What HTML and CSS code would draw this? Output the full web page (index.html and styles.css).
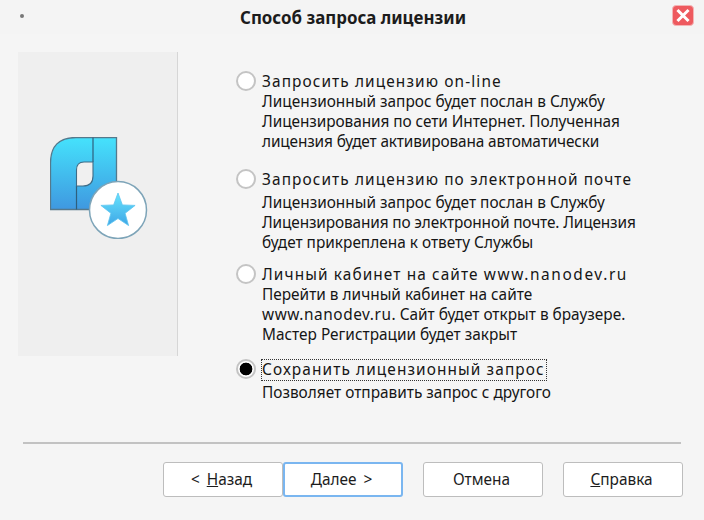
FILE: index.html
```html
<!DOCTYPE html>
<html lang="ru">
<head>
<meta charset="utf-8">
<title>Способ запроса лицензии</title>
<link rel="stylesheet" href="styles.css">
</head>
<body>
<div class="window">
  <header class="titlebar">
    <span class="dot"></span>
    <h1 class="title">Способ запроса лицензии</h1>
    <span class="close">
      <svg width="22" height="21" viewBox="0 0 22 21"><rect x="0.5" y="0.5" width="21" height="20" rx="3.5" fill="#ee5a5f" stroke="#f3b5b6"/><path d="M6.5 6l9 9M15.5 6l-9 9" stroke="#fff" stroke-width="3" stroke-linecap="square"/></svg>
    </span>
  </header>
  <main class="body">
    <aside class="side">
      <svg class="logo" width="98" height="102" viewBox="0 0 98 102">
        <defs>
          <linearGradient id="g1" x1="0" y1="0" x2="0" y2="1"><stop offset="0" stop-color="#45e2fc"/><stop offset="1" stop-color="#3f98e0"/></linearGradient>
          <linearGradient id="g2" x1="0" y1="0" x2="0" y2="1"><stop offset="0" stop-color="#66e4fd"/><stop offset="1" stop-color="#3fa6e6"/></linearGradient>
        </defs>
        <path d="M0.500 72.500V26Q0.500 0.500 26 0.500H66.500V72.500Z" fill="url(#g1)" stroke="#55798c" stroke-width="1.300"/>
        <path d="M26.500 72.500V49M43 0.500V25" fill="none" stroke="#2f5f7d" stroke-width="1.200"/>
        <path d="M26.500 49V33Q26.500 25 34 25H43V39Q43 49 33 49Z" fill="#f0f0f0" stroke="#3f6c86" stroke-width="1.100"/>
        <circle cx="68" cy="73" r="28.500" fill="#fff" stroke="#7da4b8" stroke-width="1.500"/>
        <path d="M68 56L72.400 67.900L85.100 68.400L75.100 76.300L78.600 88.600L68 81.500L57.400 88.600L60.900 76.300L50.900 68.400L63.600 67.900Z" fill="url(#g2)" stroke="#5ec5f0" stroke-width="0.800" stroke-linejoin="round"/>
      </svg>
    </aside>
    <section class="options">
      <div class="option opt-first">
        <span class="radio"></span>
        <div class="text">
          <div class="head">Запросить лицензию on-line</div>
          <div class="desc">Лицензионный запрос будет послан в Службу<br><span class="tight">Лицензирования по сети Интернет. Полученная</span><br><span class="tighter">лицензия будет активирована автоматически</span></div>
        </div>
      </div>
      <div class="option opt-second">
        <span class="radio"></span>
        <div class="text">
          <div class="head">Запросить лицензию по электронной почте</div>
          <div class="desc desc-low">Лицензионный запрос будет послан в Службу<br><span class="tighter">Лицензирования по электронной почте. Лицензия</span><br>будет прикреплена к ответу Службы</div>
        </div>
      </div>
      <div class="option opt-third">
        <span class="radio"></span>
        <div class="text">
          <div class="head">Личный кабинет на сайте <span class="latin">www.nanodev.ru</span></div>
          <div class="desc">Перейти в личный кабинет на сайте<br><span class="latin">www.nanodev.ru</span>. Сайт будет открыт в браузере.<br>Мастер Регистрации будет закрыт</div>
        </div>
      </div>
      <div class="option opt-fourth">
        <span class="radio radio-on"></span>
        <div class="text">
          <div class="head head-focus">Сохранить лицензионный запрос</div>
          <div class="desc desc-low">Позволяет отправить запрос с другого</div>
        </div>
      </div>
    </section>
  </main>
  <hr class="sep">
  <footer class="buttons">
    <div class="pair">
      <button class="btn">&lt; <u>Н</u>азад</button>
      <button class="btn btn-default"><u>Д</u>алее &gt;</button>
    </div>
    <button class="btn">Отмена</button>
    <button class="btn"><u>С</u>правка</button>
  </footer>
</div>
</body>
</html>
```
FILE: styles.css
```css
* { box-sizing: border-box; }
html, body { margin: 0; padding: 0; }
body {
  width: 704px;
  height: 520px;
  background: #f5f5f5;
  font-family: "Noto Sans", "Open Sans", sans-serif;
  font-size: 15.4px;
  color: #161616;
  overflow: hidden;
}
.window { display: flex; flex-direction: column; height: 520px; }
.titlebar {
  height: 34px;
  display: flex;
  align-items: center;
  justify-content: space-between;
  padding: 0 10px 0 20px;
  background: #f4f4f4;
}
.dot { width: 4px; height: 4px; border-radius: 50%; background: #777; margin-top: -3px; }
.title { margin: 2px 0 0 10px; font-size: 16.9px; font-weight: 700; line-height: 20px; color: #1c1c1c; }
.close { display: flex; width: 22px; height: 21px; margin-top: -3px; }
.body { display: flex; padding: 18px 0 0 18px; height: 322px; flex: none; }
.side {
  width: 160px;
  height: 304px;
  background: #efefef;
  border-right: 1px solid #d6d6d6;
  padding: 85px 0 0 32px;
  flex: none;
}
.logo { display: block; }
.options { display: flex; flex-direction: column; padding-left: 58px; }
.option { display: flex; gap: 6px; }
.opt-first { margin-top: 19px; }
.opt-second { margin-top: 17px; }
.opt-third { margin-top: 11px; }
.opt-fourth { margin-top: 14px; }
.radio {
  width: 20px;
  height: 20px;
  flex: none;
  border-radius: 50%;
  background: #fff;
  border: 2px solid #c4c4c4;
}
.radio-on {
  background: radial-gradient(circle, #000 0 6px, #fff 6.7px);
}
.text { line-height: 20px; padding-top: 1px; }
.head { letter-spacing: 1.1px; height: 20px; white-space: nowrap; }
.head-focus { outline: 1px dotted #333; width: 284px; }
.desc { white-space: nowrap; }
.desc-low { padding-top: 3px; }
.tight { letter-spacing: -0.07px; }
.tighter { letter-spacing: -0.14px; }
.latin { letter-spacing: 0.55px; }
.head .latin { letter-spacing: 1.6px; }
.sep {
  margin: 86px 23px 0;
  width: 658px;
  height: 2px;
  border: 0;
  background: #c2c2c2;
  flex: none;
}
.buttons { display: flex; gap: 20px; padding: 18px 0 0 163px; }
.pair { display: flex; }
.btn {
  width: 120px;
  height: 35px;
  background: #fff;
  border: 1px solid #bdbdbd;
  border-radius: 3px;
  font: inherit;
  word-spacing: 3px;
  color: #1c1c1c;
  padding: 0 3px 0 0;
}
.btn-default { border: 2px solid #7ab6f0; }
```
